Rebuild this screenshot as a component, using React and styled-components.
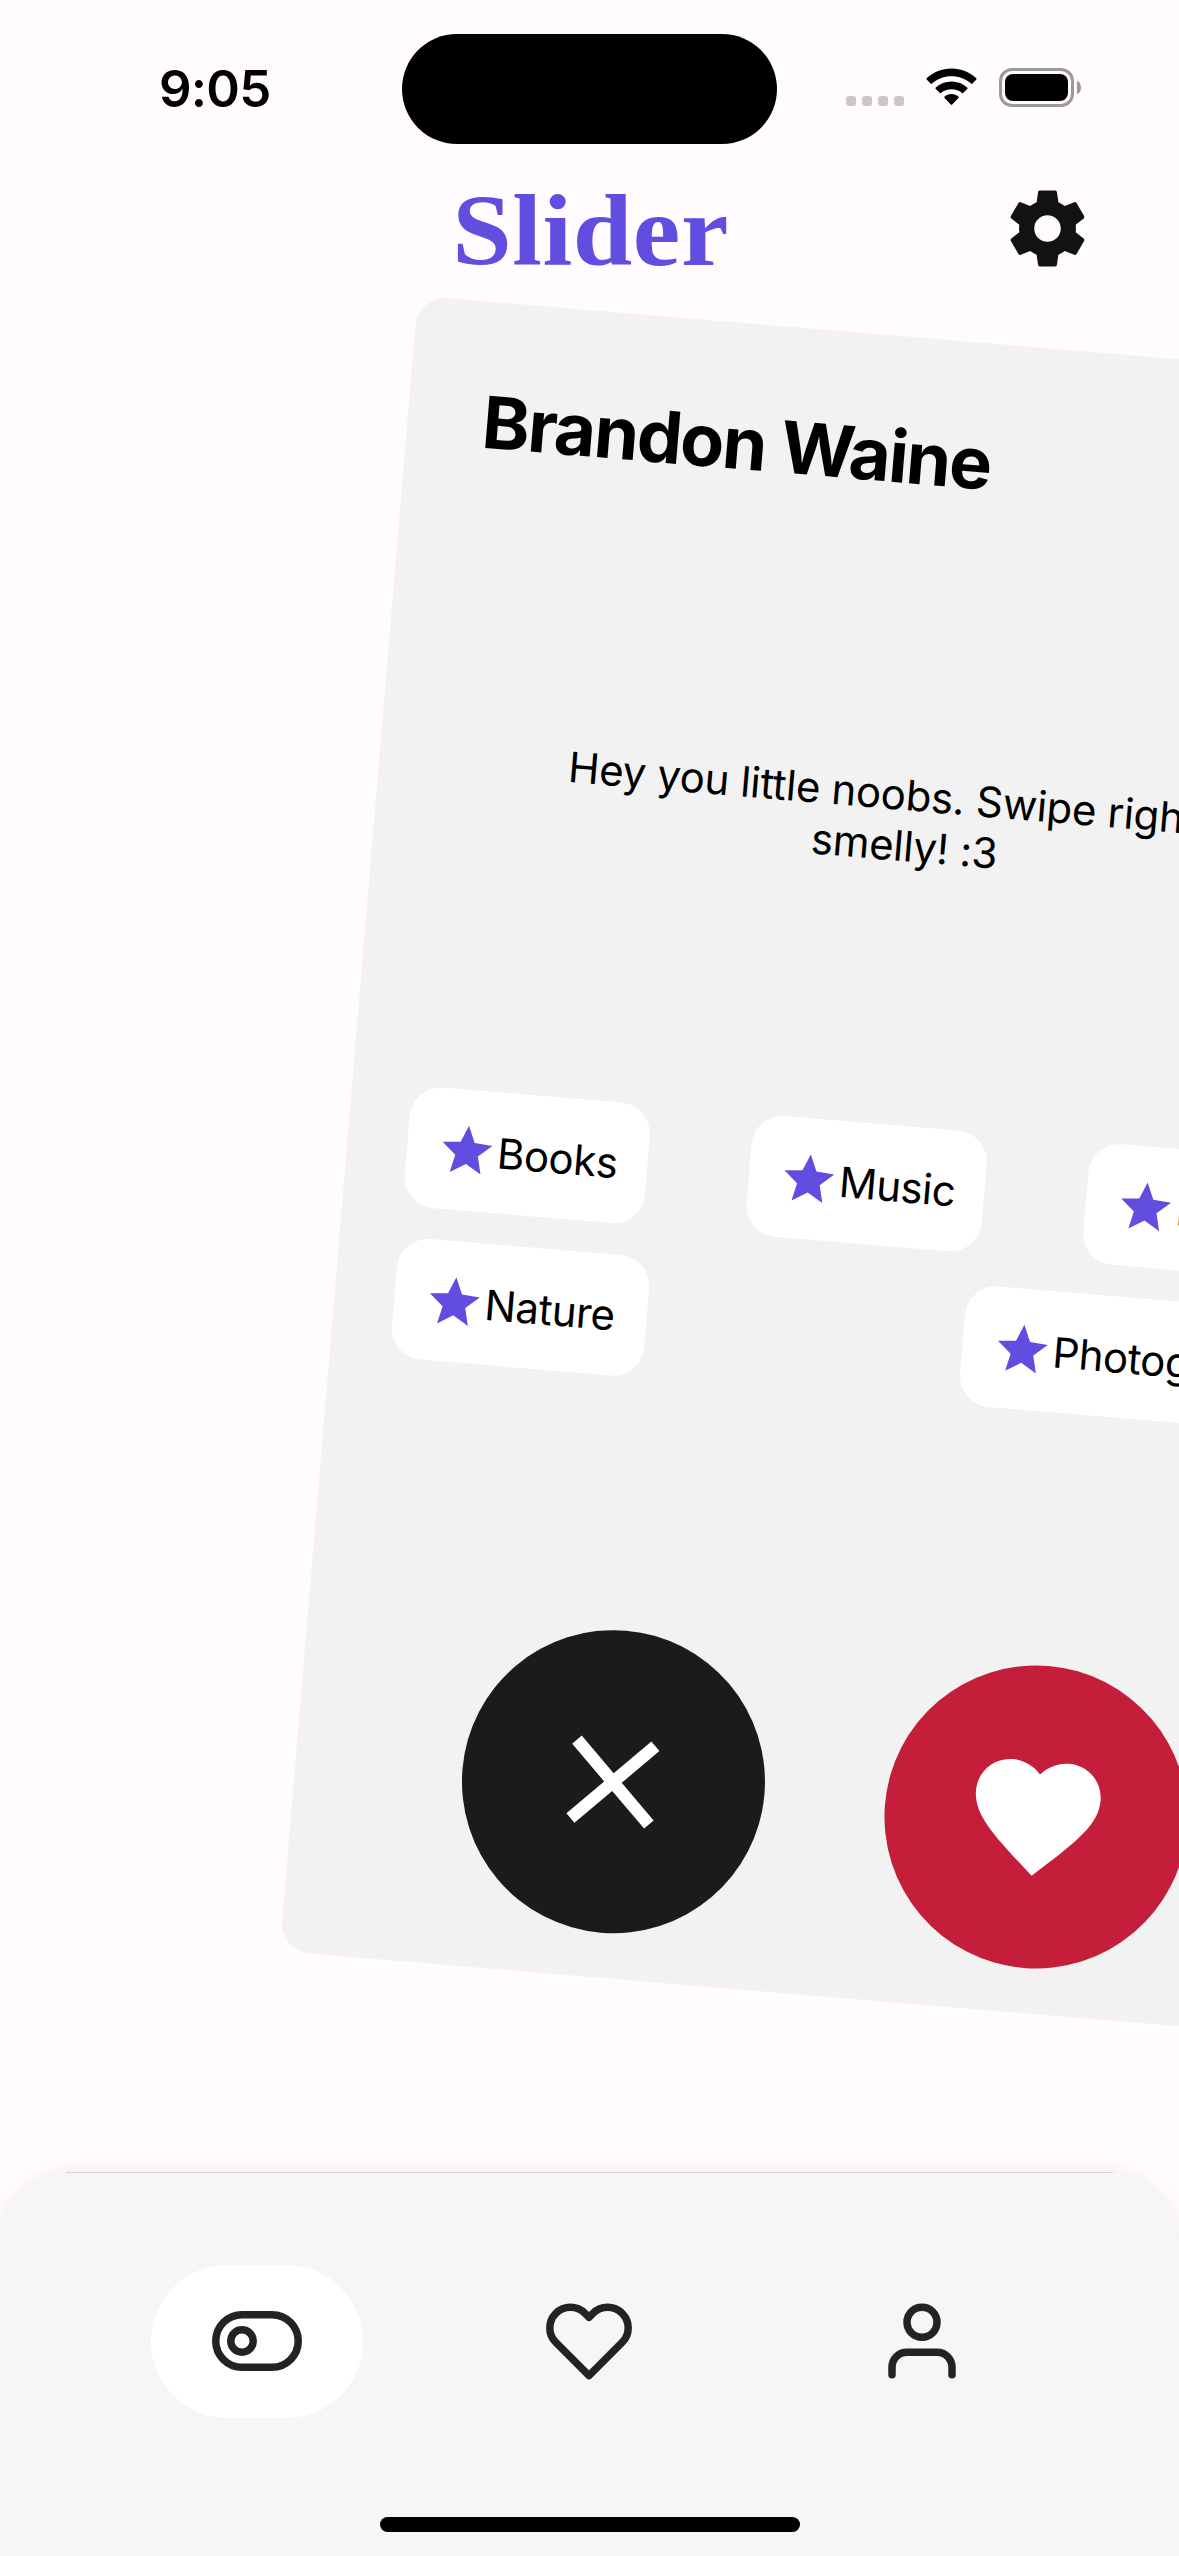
import React from "react";
import styled, { createGlobalStyle } from "styled-components";
import { MdClose, MdFavorite, MdStar } from "react-icons/md";

const colors = {
  background: "#fffbff",
  card: "#f2f2f2",
  accent: "#614de0",
  dark: "#1b1b1b",
  like: "#c41e3a",
  icon: "#232323",
  nav: "#f6f6f6",
};

const GlobalStyle = createGlobalStyle`
  * { box-sizing: border-box; }
  body {
    margin: 0;
    background: ${colors.background};
    font-family: Inter, "Liberation Sans", sans-serif;
    color: #000;
  }
  svg { display: block; flex: none; }
`;

const Screen = styled.main`
  width: 1179px;
  height: 2556px;
  display: flex;
  flex-direction: column;
  overflow: hidden;
  background: ${colors.background};
`;

const StatusBar = styled.div`
  flex: none;
  display: grid;
  grid-template-columns: 402px 375px 402px;
  height: 177px;
  padding-top: 33px;
`;

const Clock = styled.div`
  padding: 25px 0 0 159px;
  font-size: 51px;
  line-height: 62px;
  font-weight: 600;
  letter-spacing: -0.8px;
`;

const Island = styled.div`
  height: 110px;
  margin-top: 1px;
  border-radius: 56px;
  background: #000;
`;

const Indicators = styled.div`
  display: flex;
  align-items: flex-start;
  padding: 35px 0 0 69px;
`;

const SignalDots = styled.div`
  display: flex;
  gap: 6px;
  margin: 28px 22px 0 0;
`;

const Dot = styled.span`
  width: 10px;
  height: 10px;
  border-radius: 3px;
  background: #cbc8cb;
`;

const Battery = styled.div`
  width: 75px;
  height: 39px;
  margin: 0 3px 0 22px;
  padding: 3px;
  border: 3px solid #9b999b;
  border-radius: 13px;
`;

const BatteryLevel = styled.div`
  height: 27px;
  border-radius: 8px;
  background: #000;
`;

const BatteryTip = styled.div`
  width: 4px;
  height: 13px;
  margin-top: 13px;
  border-radius: 0 4px 4px 0 / 0 6.5px 6.5px 0;
  background: #9b999b;
`;

const Header = styled.header`
  flex: none;
  display: grid;
  grid-template-columns: 1fr auto 1fr;
  height: 121px;
  padding: 0 86px 0 89px;
`;

const Title = styled.h1`
  grid-column: 2;
  margin: 0;
  font-family: "Liberation Serif", serif;
  font-size: 101px;
  line-height: 108px;
  font-weight: 700;
  letter-spacing: 0.5px;
  color: ${colors.accent};
  transform: scaleX(1.06);
`;

const SettingsButton = styled.div`
  justify-self: end;
  padding-top: 6px;
  color: #121212;
`;

const Deck = styled.section`
  flex: none;
  height: 1874px;
  padding: 39.3px 0 0 346.5px;
`;

const Card = styled.article`
  width: 1061px;
  height: 1661px;
  padding: 76px 45px 45px;
  display: flex;
  flex-direction: column;
  border-radius: 30px;
  background: ${colors.card};
  transform: rotate(4.775deg);
`;

const Name = styled.h2`
  margin: 0 0 268px;
  padding-left: 30px;
  font-size: 72px;
  line-height: 87px;
  font-weight: 700;
  letter-spacing: -1.85px;
`;

const Bio = styled.p`
  margin: 0 auto;
  width: 760px;
  height: 356px;
  font-size: 42px;
  line-height: 51px;
  letter-spacing: -0.27px;
  text-align: center;
`;

const Tags = styled.div`
  display: flex;
  flex-direction: column;
  gap: 31px;
  padding: 0 15px;
`;

const TagRow = styled.div`
  display: flex;
  justify-content: space-between;
`;

const Tag = styled.div`
  display: flex;
  align-items: center;
  gap: 0.5px;
  width: ${(p) => p.$width}px;
  height: 121px;
  padding: 0 0 0 30px;
  border-radius: 31px;
  background: #fff;
  font-size: 42px;
  line-height: 51px;
  letter-spacing: -0.5px;
  white-space: nowrap;

  svg { color: ${colors.accent}; }
`;

const Actions = styled.div`
  display: flex;
  justify-content: space-evenly;
  margin-top: auto;
`;

const ActionButton = styled.div`
  width: 303px;
  height: 303px;
  display: flex;
  align-items: center;
  justify-content: center;
  border-radius: 50%;
  color: #fff;
  background: ${(p) => p.$color};
`;

const TabBar = styled.nav`
  flex: none;
  height: 384px;
  border-radius: 76px 76px 0 0;
  background: ${colors.nav};
  box-shadow: 0 0 20px rgba(60, 0, 40, 0.08);
  position: relative;
`;

const Divider = styled.div`
  height: 1px;
  margin: 0 66px 92px;
  background: #d4d3d4;
`;

const TabList = styled.div`
  display: grid;
  grid-template-columns: repeat(3, 1fr);
  justify-items: center;
  padding: 0 91px;
`;

const Tab = styled.div`
  width: 212px;
  height: 153px;
  display: flex;
  align-items: center;
  justify-content: center;
  border-radius: 77px;
  background: ${(p) => (p.$active ? "#fff" : "transparent")};

  svg { margin-bottom: 1px; }
`;

const HomeBar = styled.div`
  width: 420px;
  height: 15px;
  margin: 99px auto 0;
  border-radius: 8px;
  background: #000;
`;

const WifiIcon = () => (
  <svg width="51" height="38" viewBox="0 0 51 38">
    <path d="M25.5.5C16 .5 7.200 4.200.7 10.200q-.7.7 0 1.400l3.800 3.900q.7.700 1.400.1C11 10.900 18 8.300 25.500 8.300s14.500 2.600 19.600 7.300q.7.600 1.400-.1l3.800-3.900q.7-.7 0-1.400C43.800 4.200 35 .5 25.500.5Z" />
    <path d="M25.500 13.500c-6 0-11.500 2.300-15.700 6q-.8.700 0 1.400l3.800 3.900q.700.600 1.400.1c2.800-2.400 6.500-3.700 10.500-3.700s7.700 1.300 10.500 3.700q.7.500 1.400-.1l3.800-3.900q.8-.7 0-1.400c-4.200-3.700-9.700-6-15.700-6Z" />
    <path d="M25.500 26c-2.600 0-5 .9-6.900 2.400q-.8.700 0 1.500l6.200 6.700q.7.700 1.400 0l6.200-6.700q.8-.8 0-1.500c-1.900-1.500-4.300-2.400-6.900-2.400Z" />
  </svg>
);

const GearIcon = () => (
  <svg width="91" height="91" viewBox="0 0 24 24" fill="currentColor">
    <path d="M19.43 12.98c.04-.32.07-.64.07-.98s-.03-.66-.07-.98l2.110-1.650c.19-.15.24-.42.12-.64l-2-3.460c-.12-.22-.39-.3-.61-.22l-2.490 1c-.52-.4-1.080-.73-1.690-.98l-.38-2.650C14.460 2.180 14.250 2 14 2h-4c-.25 0-.46.18-.49.42l-.38 2.650c-.61.25-1.170.59-1.690.98l-2.490-1c-.23-.09-.49 0-.61.22l-2 3.460c-.13.22-.07.49.12.64l2.110 1.650c-.04.32-.07.65-.07.98s.03.66.07.98l-2.110 1.650c-.19.15-.24.42-.12.64l2 3.460c.12.22.39.3.61.22l2.490-1c.52.4 1.080.73 1.690.98l.38 2.650c.03.24.24.42.49.42h4c.25 0 .46-.18.49-.42l.38-2.650c.61-.25 1.170-.59 1.690-.98l2.490 1c.23.09.49 0 .61-.22l2-3.460c.12-.22.07-.49-.12-.64l-2.110-1.650zM12 15.500c-1.930 0-3.500-1.570-3.500-3.500s1.570-3.500 3.500-3.500 3.500 1.570 3.500 3.500-1.570 3.500-3.500 3.500z" />
  </svg>
);

const LineIcon = ({ children }) => (
  <svg
    width="90"
    height="90"
    viewBox="0 0 24 24"
    fill="none"
    stroke={colors.icon}
    strokeWidth="2"
    strokeLinecap="round"
    strokeLinejoin="round"
  >
    {children}
  </svg>
);

const interests = [
  [
    { label: "Books", width: 241 },
    { label: "Music", width: 236 },
    { label: "Movies", width: 260 },
  ],
  [
    { label: "Nature", width: 253 },
    { label: "Photography", width: 371 },
  ],
];

export default function App() {
  return (
    <Screen>
      <GlobalStyle />
      <StatusBar>
        <Clock>9:05</Clock>
        <Island />
        <Indicators>
          <SignalDots>
            <Dot />
            <Dot />
            <Dot />
            <Dot />
          </SignalDots>
          <WifiIcon />
          <Battery>
            <BatteryLevel />
          </Battery>
          <BatteryTip />
        </Indicators>
      </StatusBar>

      <Header>
        <Title>Slider</Title>
        <SettingsButton>
          <GearIcon />
        </SettingsButton>
      </Header>

      <Deck>
        <Card>
          <Name>Brandon Waine</Name>
          <Bio>
            Hey you little noobs. Swipe right ur
            <br />
            smelly! :3
          </Bio>
          <Tags>
            {interests.map((row, i) => (
              <TagRow key={i}>
                {row.map((tag) => (
                  <Tag key={tag.label} $width={tag.width}>
                    <MdStar size={60} />
                    {tag.label}
                  </Tag>
                ))}
              </TagRow>
            ))}
          </Tags>
          <Actions>
            <ActionButton $color={colors.dark}>
              <MdClose size={150} />
            </ActionButton>
            <ActionButton $color={colors.like}>
              <MdFavorite size={150} />
            </ActionButton>
          </Actions>
        </Card>
      </Deck>

      <TabBar>
        <Divider />
        <TabList>
          <Tab $active>
            <LineIcon>
              <rect x="1" y="5" width="22" height="14" rx="7" />
              <circle cx="8" cy="12" r="3" />
            </LineIcon>
          </Tab>
          <Tab>
            <LineIcon>
              <path d="M20.840 4.610a5.500 5.500 0 0 0-7.780 0L12 5.670l-1.060-1.060a5.500 5.500 0 0 0-7.780 7.780l1.060 1.060L12 21.230l7.780-7.780 1.060-1.060a5.500 5.500 0 0 0 0-7.780z" />
            </LineIcon>
          </Tab>
          <Tab>
            <LineIcon>
              <path d="M20 21v-2a4 4 0 0 0-4-4H8a4 4 0 0 0-4 4v2" />
              <circle cx="12" cy="7" r="4" />
            </LineIcon>
          </Tab>
        </TabList>
        <HomeBar />
      </TabBar>
    </Screen>
  );
}
